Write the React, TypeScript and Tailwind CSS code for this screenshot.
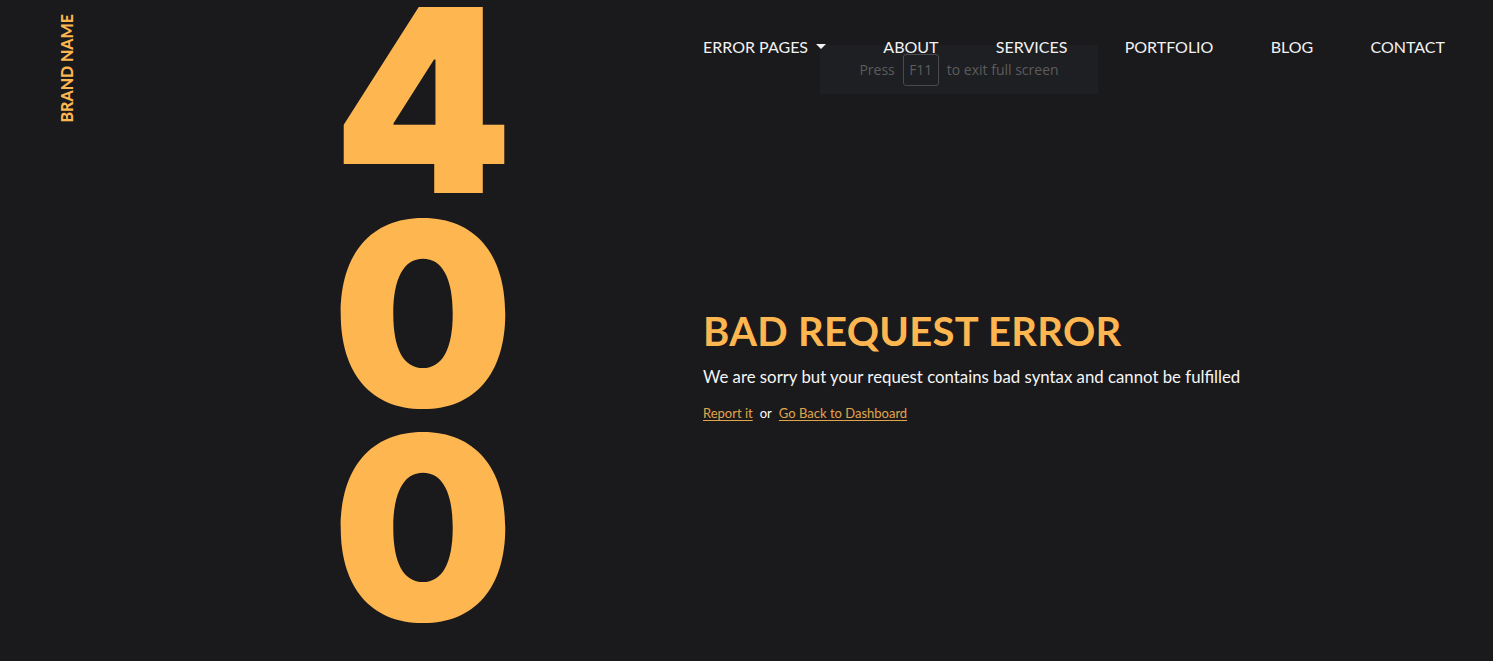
const navItems = ["ABOUT", "SERVICES", "PORTFOLIO", "BLOG", "CONTACT"];

export default function App() {
  return (
    <div className="relative flex h-[661px] w-full overflow-hidden bg-[#1a1a1c] font-['Lato',sans-serif] text-white">
      {/* brand */}
      <div className="flex w-[134px] justify-center pt-[14px]">
        <span className="h-fit rotate-180 text-[16px] font-black tracking-[0px] text-[#fdb650] [writing-mode:vertical-rl]">
          BRAND NAME
        </span>
      </div>

      {/* big code */}
      <div className="-mt-[7px] flex w-[569px] flex-col items-center pl-[9px]">
        {["4", "0", "0"].map((d, i) => (
          <span
            key={i}
            className="block h-[214px] font-['Inter',sans-serif] text-[256px] font-black leading-[214px] text-[#fdb650]"
          >
            {d}
          </span>
        ))}
      </div>

      {/* right column */}
      <div className="flex flex-1 flex-col pr-[48px]">
        <nav className="relative z-10 flex items-center justify-between pt-[35px] text-[16px] text-[#f2f2f2]">
          <a className="flex items-center gap-[8px]">
            ERROR PAGES
            <span className="mb-[2px] h-0 w-0 border-x-[5px] border-t-[5px] border-x-transparent border-t-[#f2f2f2]" />
          </a>
          {navItems.map((n) => (
            <a key={n}>{n}</a>
          ))}
        </nav>

        <div className="mt-[249px]">
          <h1 className="text-[40px] font-bold leading-[46px] tracking-[0.3px] text-[#fdb650]">
            BAD REQUEST ERROR
          </h1>
          <p className="mt-[10px] text-[16.8px] text-[#f5f5f5]">
            We are sorry but your request contains bad syntax and cannot be fulfilled
          </p>
          <p className="mt-[15px] flex items-center gap-[7px] text-[13px]">
            <a className="text-[#e0a54c] underline underline-offset-2">Report it</a>
            <span className="text-white">or</span>
            <a className="text-[#e0a54c] underline underline-offset-2">Go Back to Dashboard</a>
          </p>
        </div>
      </div>

      {/* browser fullscreen hint */}
      <div className="absolute left-[820px] top-[45px] flex h-[49px] w-[278px] items-center justify-center gap-[8px] bg-[#1e1f22] font-['Open_Sans',sans-serif] text-[14px] text-[#5c5c5c]">
        <span>Press</span>
        <span className="flex h-[32px] w-[36px] items-center justify-center rounded-[3px] border border-[#4a4a4a]">F11</span>
        <span>to exit full screen</span>
      </div>
    </div>
  );
}
